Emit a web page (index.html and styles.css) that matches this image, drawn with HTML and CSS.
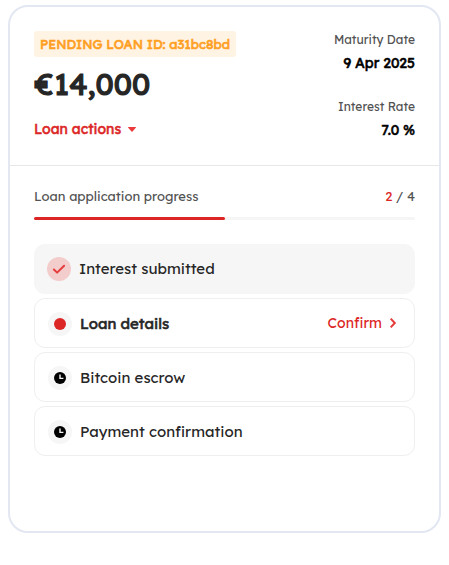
FILE: index.html
```html
<!DOCTYPE html>
<html lang="en">
<head>
<meta charset="utf-8">
<title>Loan</title>
<link rel="stylesheet" href="styles.css">
</head>
<body>
<main class="card">
  <header class="summary">
    <div class="loan">
      <span class="badge">PENDING LOAN ID: a31bc8bd</span>
      <div class="amount">€14,000</div>
      <div class="actions"><span>Loan actions</span><svg class="caret" width="8" height="5" viewBox="0 0 8 5"><path d="M.4 0h7.2q.6.3.2.8L4.5 4.6q-.5.5-1 0L.2.8Q-.2.3.4 0z" fill="#ec3b3b"/></svg></div>
    </div>
    <dl class="terms">
      <dt class="maturity">Maturity Date</dt>
      <dd class="date">9 Apr 2025</dd>
      <dt class="interest">Interest Rate</dt>
      <dd class="rate">7.0 %</dd>
    </dl>
  </header>
  <section class="progress">
    <div class="progress-head"><span class="progress-title">Loan application progress</span><span class="count"><span class="current">2</span> / 4</span></div>
    <div class="track"><div class="bar"></div></div>
    <div class="steps">
      <div class="step done">
        <span class="icon"><svg width="24" height="24" viewBox="0 0 24 24"><path d="M6.9 12.5l3.2 3.1 7-6.9" fill="none" stroke="#e53c3c" stroke-width="2" stroke-linecap="round" stroke-linejoin="round"/></svg></span>
        <span class="label submitted">Interest submitted</span>
      </div>
      <div class="step active">
        <span class="icon"><svg width="24" height="24" viewBox="0 0 24 24"><circle cx="12" cy="12" r="6" fill="#dc2626"/></svg></span>
        <span class="label details">Loan details</span>
        <span class="confirm">Confirm</span>
        <svg class="chevron" width="8" height="12" viewBox="0 0 8 12"><path d="M1.7 1.6L5.8 6 1.7 10.4" fill="none" stroke="#e53c3c" stroke-width="2"/></svg>
      </div>
      <div class="step">
        <span class="icon"><svg width="24" height="24" viewBox="0 0 24 24"><circle cx="12" cy="12" r="6" fill="#000"/><path d="M12 8.6V12.4H15.4" fill="none" stroke="#f6f6f6" stroke-width="1.4"/></svg></span>
        <span class="label escrow">Bitcoin escrow</span>
      </div>
      <div class="step">
        <span class="icon"><svg width="24" height="24" viewBox="0 0 24 24"><circle cx="12" cy="12" r="6" fill="#000"/><path d="M12 8.6V12.4H15.4" fill="none" stroke="#f6f6f6" stroke-width="1.4"/></svg></span>
        <span class="label payment">Payment confirmation</span>
      </div>
    </div>
  </section>
</main>
</body>
</html>
```
FILE: styles.css
```css
* { box-sizing: border-box; }
body {
  margin: 5px 8px 0;
  background: #fff;
  color: #262626;
  font-family: Lexend, Inter, "Open Sans", sans-serif;
  white-space: nowrap;
}
.card {
  height: 528px;
  border: 2px solid #e2e7f2;
  border-radius: 20px;
}
.summary {
  display: flex;
  justify-content: space-between;
  height: 159px;
  padding: 24px;
  border-bottom: 1px solid #e7e7e9;
}
.badge {
  display: block;
  width: 202px;
  height: 26px;
  padding: 0 6px;
  border-radius: 3px;
  background: #fff3e4;
  color: #ff9f1f;
  font-size: 13px;
  -webkit-text-stroke: 0.6px;
  line-height: 27px;
}
.amount {
  margin-top: 7px;
  padding-left: 0.5px;
  font-size: 30px;
  -webkit-text-stroke: 1.2px;
  line-height: 40px;
}
.actions {
  display: flex;
  align-items: center;
  gap: 7px;
  margin-top: 15px;
  color: #dc2626;
  font-size: 14px;
  -webkit-text-stroke: 0.5px;
  line-height: 20px;
}
.terms {
  display: flex;
  flex-direction: column;
  align-items: flex-end;
  margin: 0;
}
.terms dt {
  color: #525252;
  font-size: 12px;
  line-height: 18px;
}
.terms dd {
  margin: 4px 0 0;
  color: #000;
  font-size: 14px;
  -webkit-text-stroke: 0.55px;
  line-height: 20px;
}
.terms .interest { margin-top: 25px; }
.progress { padding: 20px 24px 0; }
.progress-head {
  display: flex;
  justify-content: space-between;
  color: #525252;
  font-size: 13px;
  line-height: 20px;
}
.current { color: #dc2626; }
.track {
  height: 3px;
  margin-top: 11px;
  border-radius: 2px;
  background: #f5f5f5;
}
.bar {
  width: 191px;
  height: 3px;
  border-radius: 2px;
  background: #dc2626;
}
.steps {
  display: grid;
  gap: 4px;
  margin-top: 24px;
}
.step {
  display: flex;
  align-items: center;
  height: 50px;
  padding: 2px 17px 0 13px;
  border: 1px solid #efefef;
  border-radius: 11px;
}
.icon {
  display: flex;
  width: 24px;
  height: 24px;
  border-radius: 50%;
  background: #f6f6f6;
}
.label {
  margin-left: 8px;
  font-size: 15px;
  line-height: 20px;
}
.done {
  padding: 0 13px;
  border: 0;
  background: #f6f6f6;
}
.done .icon { background: #f3cccc; }
.active .label { -webkit-text-stroke: 0.55px; }
.confirm {
  margin-left: auto;
  padding-bottom: 2px;
  color: #dc2626;
  font-size: 14px;
}
.chevron { margin: 0 0 2px 7px; }
```
